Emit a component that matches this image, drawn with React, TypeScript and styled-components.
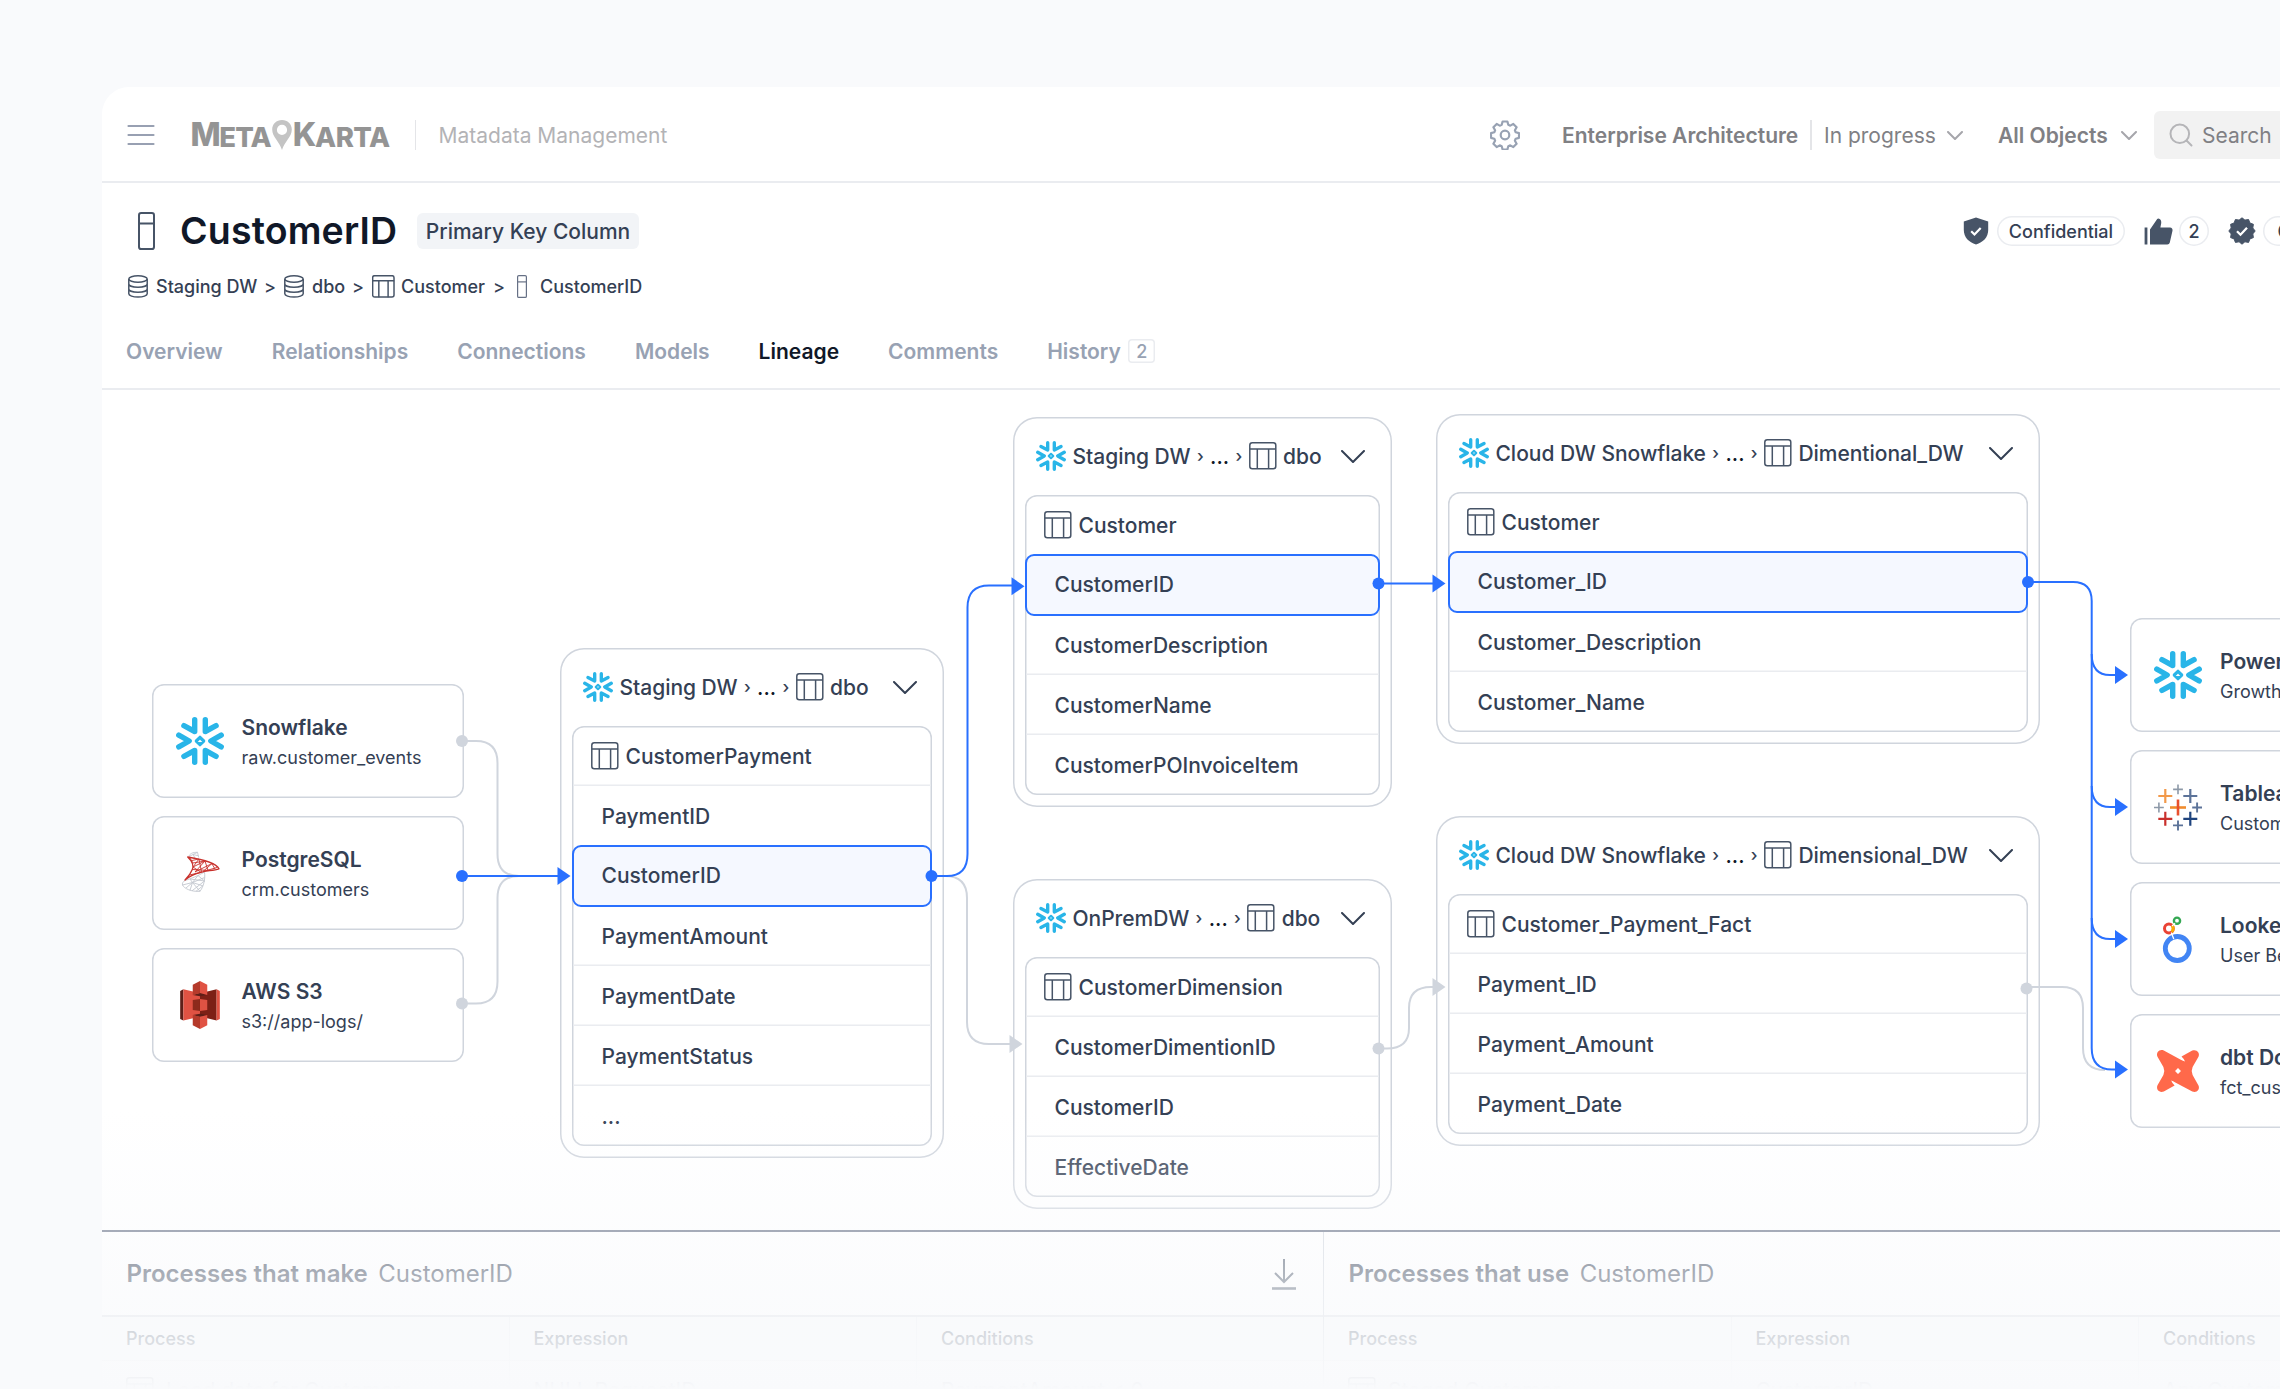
import React from 'react';
import styled, { createGlobalStyle, css } from 'styled-components';

const C = {
  ink: '#344054',
  slate: '#475467',
  mute: '#98a2b3',
  line: '#d0d5dd',
  hair: '#eaecf0',
  blue: '#2970ff',
  blueBg: '#f5f8ff',
  snow: '#29b5e8',
  page: '#f9fafc',
};

const Global = createGlobalStyle`
  *, *::before, *::after { box-sizing: border-box; }
  html, body { margin: 0; padding: 0; overflow: hidden; background: ${C.page}; }
  body { font-family: Inter, "Liberation Sans", sans-serif; color: ${C.ink}; }
  svg { display: block; flex: none; }
`;

const Page = styled.div`
  position: relative;
  width: 2280px;
  height: 1389px;
  padding: 87px 0 0 102px;
  overflow: hidden;
  background: ${C.page};
`;

const Panel = styled.div`
  display: flex;
  flex-direction: column;
  height: 1302px;
  background: #fff;
  border-top-left-radius: 27px;
  overflow: hidden;
`;

const Fade = styled.div`
  position: absolute;
  left: 0;
  right: 0;
  bottom: 0;
  height: 279px;
  background: linear-gradient(to bottom, rgba(249, 250, 252, 0), ${C.page});
  pointer-events: none;
`;

/* ---------- top bar ---------- */

const TopBar = styled.header`
  display: flex;
  align-items: center;
  flex: none;
  height: 96px;
  padding: 2px 0 0 25px;
  border-bottom: 2px solid ${C.hair};
  white-space: nowrap;
`;

const Logo = styled.div`
  display: flex;
  align-items: center;
  flex: none;
  width: 199px;
  margin-left: 35.5px;
  color: #949494;
  font-weight: 800;
`;

const LogoPart = styled.span<{ $size: number; $track: number; $drop?: number }>`
  font-size: ${(p) => p.$size}px;
  line-height: 30px;
  letter-spacing: ${(p) => p.$track}px;
  padding-top: ${(p) => p.$drop ?? 0}px;
`;

const Rule = styled.span<{ $ml: number; $mr: number }>`
  flex: none;
  width: 1.5px;
  height: 30px;
  margin-left: ${(p) => p.$ml}px;
  margin-right: ${(p) => p.$mr}px;
  background: #e4e5e8;
`;

const BarText = styled.span<{ $bold?: boolean; $tone: string; $w: number; $ml?: number }>`
  flex: none;
  width: ${(p) => p.$w}px;
  margin-left: ${(p) => p.$ml ?? 0}px;
  font-size: 21px;
  font-weight: ${(p) => (p.$bold ? 600 : 400)};
  color: ${(p) => p.$tone};
`;

const BarGroup = styled.div`
  display: flex;
  align-items: center;
  flex: none;
  margin-left: auto;
  width: 790px;
`;

const SearchBox = styled.div`
  display: flex;
  align-items: center;
  gap: 9px;
  flex: none;
  width: 140px;
  height: 48px;
  margin-left: 17px;
  padding-left: 15px;
  border-radius: 6px;
  background: #f2f2f2;
`;

/* ---------- object header ---------- */

const ObjectHeader = styled.section`
  display: flex;
  flex-direction: column;
  flex: none;
  height: 207px;
  padding: 28px 0 0 25px;
  border-bottom: 2px solid ${C.hair};
  white-space: nowrap;
`;

const TitleRow = styled.div`
  display: flex;
  align-items: center;
  height: 40px;
`;

const TitleIcon = styled.span`
  margin-left: 11px;
`;

const Title = styled.h1`
  flex: none;
  width: 217px;
  margin: 0 20px 0 25px;
  font-size: 37.5px;
  font-weight: 600;
  line-height: 40px;
  letter-spacing: 0.15px;
  color: #101828;
`;

const KindBadge = styled.span`
  display: flex;
  align-items: center;
  justify-content: center;
  width: 222px;
  height: 36px;
  border-radius: 6px;
  background: #f2f4f7;
  font-size: 21px;
  font-weight: 500;
`;

const Marks = styled.div`
  display: flex;
  align-items: center;
  width: 317.5px;
  margin-left: auto;
`;

const Pill = styled.span<{ $w: number; $ml: number; $mr: number }>`
  display: flex;
  align-items: center;
  justify-content: center;
  flex: none;
  width: ${(p) => p.$w}px;
  height: 30px;
  margin-left: ${(p) => p.$ml}px;
  margin-right: ${(p) => p.$mr}px;
  border-radius: 15px;
  box-shadow: inset 0 0 0 1.5px ${C.hair};
  font-size: 18px;
  font-weight: 500;
`;

const Crumbs = styled.nav`
  display: flex;
  align-items: center;
  height: 28px;
  margin-top: 21px;
  font-size: 18px;
  font-weight: 500;
`;

const Crumb = styled.span<{ $gap: number; $w: number; $pl?: number }>`
  display: flex;
  align-items: center;
  gap: ${(p) => p.$gap}px;
  width: ${(p) => p.$w}px;
  padding-left: ${(p) => p.$pl ?? 0}px;
`;

const CrumbSep = styled.span`
  width: 11px;
  margin: 0 9px 0 8px;
`;

const Tabs = styled.nav`
  display: flex;
  align-items: center;
  gap: 49px;
  height: 88px;
  margin-left: -1px;
  padding-top: 14px;
`;

const Tab = styled.span<{ $on?: boolean }>`
  display: flex;
  align-items: center;
  gap: 7.5px;
  font-size: 21px;
  font-weight: 600;
  color: ${(p) => (p.$on ? '#101828' : C.mute)};
`;

const TabCount = styled.span`
  display: flex;
  align-items: center;
  justify-content: center;
  width: 27px;
  height: 24px;
  border-radius: 4px;
  box-shadow: inset 0 0 0 1.5px ${C.hair};
  font-size: 18px;
  font-weight: 500;
`;

/* ---------- lineage canvas ---------- */

const ORIGIN = { x: 102, y: 390 };

const Canvas = styled.section`
  position: relative;
  flex: none;
  height: 840px;
`;

const Wires = styled.svg`
  position: absolute;
  inset: 0;
  pointer-events: none;
`;

const placed = css<{ $x: number; $y: number; $w: number }>`
  position: absolute;
  left: ${(p) => p.$x - ORIGIN.x}px;
  top: ${(p) => p.$y - ORIGIN.y}px;
  width: ${(p) => p.$w}px;
`;

const SystemCard = styled.div<{ $x: number; $y: number; $w: number }>`
  ${placed}
  display: flex;
  align-items: center;
  gap: 18px;
  height: 114px;
  padding-left: 24px;
  border-radius: 12px;
  background: #fff;
  box-shadow: inset 0 0 0 1.5px ${C.line};
  white-space: nowrap;
`;

const SystemText = styled.div`
  display: flex;
  flex-direction: column;
  padding-top: 4px;
`;

const SystemName = styled.span`
  font-size: 21px;
  font-weight: 600;
  line-height: 30px;
`;

const SystemPath = styled.span`
  font-size: 18px;
  line-height: 30px;
`;

const Node = styled.div<{ $x: number; $y: number; $w: number }>`
  ${placed}
  display: flex;
  flex-direction: column;
  padding: 0 12px 12px;
  border-radius: 24px;
  background: #fff;
  box-shadow: inset 0 0 0 1.5px ${C.line};
  font-size: 21px;
  font-weight: 500;
  white-space: nowrap;
`;

const NodeHead = styled.div`
  display: flex;
  align-items: center;
  height: 78px;
  padding: 0 15px 0 11px;
`;

const HeadSystem = styled.span`
  margin-left: 6.5px;
  letter-spacing: -0.03px;
`;

const HeadSep = styled.span`
  flex: none;
  width: 19.5px;
  font-size: 17px;
  line-height: 20px;
  text-align: center;
`;

const HeadDots = styled.span`
  flex: none;
  width: 19px;
  color: #101828;
`;

const HeadSchema = styled.span`
  margin-left: 6.5px;
  margin-right: auto;
  letter-spacing: -0.03px;
`;

const Columns = styled.div`
  display: flex;
  flex-direction: column;
  border-radius: 12px;
  box-shadow: inset 0 0 0 1.5px ${C.line};
`;

const ColumnRow = styled.div<{ $head?: boolean; $on?: boolean; $rule?: boolean }>`
  display: flex;
  align-items: center;
  gap: 7px;
  height: 60px;
  margin: 0 1px;
  padding-left: ${(p) => (p.$head ? 17.5 : 28.5)}px;
  box-shadow: ${(p) => (p.$rule ? `inset 0 -1.5px 0 ${C.hair}` : 'none')};
  ${(p) =>
    p.$on &&
    css`
      height: 61.5px;
      margin: -1px 0 -0.5px;
      border: 2px solid ${C.blue};
      padding-left: 27.5px;
      border-radius: 9px;
      background: ${C.blueBg};
    `}
`;

/* ---------- processes ---------- */

const Processes = styled.section`
  display: grid;
  grid-template-columns: 1222px 1222px;
  flex: 1;
  border-top: 2px solid #667085;
`;

const ProcessPane = styled.div`
  display: flex;
  flex-direction: column;
  border-right: 1.5px solid ${C.line};
`;

const PaneHead = styled.div`
  display: flex;
  align-items: center;
  gap: 10.5px;
  height: 85px;
  padding: 0 26px 0 24.5px;
  border-bottom: 2px solid #d9dce2;
  font-size: 24px;
  color: ${C.ink};
`;

const PaneTitle = styled.span`
  font-weight: 600;
`;

const PaneSubject = styled.span`
  margin-right: auto;
`;

const PaneRow = styled.div<{ $head?: boolean }>`
  display: grid;
  grid-template-columns: 407.5px 407.5px 1fr;
  height: ${(p) => (p.$head ? 44 : 60)}px;
  background: ${(p) => (p.$head ? '#f9fafb' : '#fff')};
  border-bottom: 1.5px solid ${C.hair};
  font-size: ${(p) => (p.$head ? 18 : 21)}px;
  font-weight: ${(p) => (p.$head ? 500 : 400)};
  color: ${(p) => (p.$head ? C.slate : C.ink)};
`;

const PaneCell = styled.span`
  display: flex;
  align-items: center;
  gap: 12px;
  padding-left: 24px;
  white-space: nowrap;

  &:not(:last-child) {
    border-right: 1px solid ${C.hair};
  }
`;

/* ---------- icons ---------- */

const MenuIcon = () => (
  <svg width="28" height="22" viewBox="0 0 28 22" stroke="#98a0b2" strokeWidth="2.2" strokeLinecap="round">
    <path d="M1.5 2h25M1.5 11h25M1.5 20h25" />
  </svg>
);

const PinIcon = () => (
  <svg width="22" height="32" viewBox="0 0 22 32">
    <path fill="#c4c4c4" fillRule="evenodd" d="M11 1C5.400 1 1.200 5 1.200 10.400c0 7.400 7.200 12 9.800 20.600 2.600-8.600 9.800-13.200 9.800-20.600C20.800 5 16.600 1 11 1Zm0 4.800a5.100 5.100 0 1 1 0 10.200 5.100 5.100 0 0 1 0-10.200Z" />
  </svg>
);

const GearIcon = () => (
  <svg width="30" height="30" viewBox="0 0 30 30" fill="none" stroke="#98a2b3" strokeWidth="2.200" strokeLinejoin="round">
    <path d="M12.600 1.500h4.800l.9 3.300 2 .85 3-1.750 3.300 3.400-1.700 3 .8 1.950 3.300.9v4.700l-3.300.9-.8 1.950 1.700 3-3.300 3.400-3-1.750-2 .85-.9 3.300h-4.800l-.9-3.300-2-.85-3 1.750-3.300-3.400 1.700-3-.8-1.950-3.300-.9v-4.700l3.300-.9.8-1.950-1.700-3 3.300-3.400 3 1.750 2-.85Z" />
    <circle cx="15" cy="15" r="4.300" />
  </svg>
);

const Chevron = ({ w = 22, h = 12, tone = C.ink, sw = 2 }: { w?: number; h?: number; tone?: string; sw?: number }) => (
  <svg width={w} height={h} viewBox={`0 0 ${w} ${h}`} fill="none" stroke={tone} strokeWidth={sw} strokeLinecap="round" strokeLinejoin="round">
    <path d={`M1 1L${w / 2} ${h - 1}L${w - 1} 1`} />
  </svg>
);

const SearchIcon = () => (
  <svg width="24" height="24" viewBox="0 0 24 24" fill="none" stroke="#b5b5b8" strokeWidth="2" strokeLinecap="round">
    <circle cx="10.800" cy="10.800" r="9.300" />
    <path d="M17.500 17.500l5 5" />
  </svg>
);

const ColumnIcon = ({ w, h, sw, tone = C.slate }: { w: number; h: number; sw: number; tone?: string }) => (
  <svg width={w} height={h} viewBox={`0 0 ${w} ${h}`} fill="none" stroke={tone} strokeWidth={sw}>
    <rect x={sw / 2} y={sw / 2} width={w - sw} height={h - sw} rx={w / 8} />
    <path d={`M0 ${h * 0.3}H${w}`} />
  </svg>
);

const DbIcon = () => (
  <svg width="20" height="23" viewBox="0 0 20 23" fill="none" stroke={C.slate} strokeWidth="1.500">
    <ellipse cx="10" cy="4" rx="9.200" ry="3.200" />
    <path d="M.8 4v14.800c0 1.800 4.100 3.300 9.200 3.300s9.200-1.500 9.200-3.300V4M.8 9c0 1.800 4.100 3.200 9.200 3.200s9.200-1.400 9.200-3.200M.8 14c0 1.800 4.100 3.200 9.200 3.200s9.200-1.400 9.200-3.200" />
  </svg>
);

const TableIcon = ({ s = 28 }: { s?: number }) => (
  <svg width={s} height={s} viewBox="0 0 28 28" fill="none" stroke={C.slate} strokeWidth={s < 25 ? 1.8 : 1.500}>
    <rect x=".8" y=".8" width="26" height="26" rx="2.500" />
    <path d="M1 7h26M8.300 7V27M19.600 7V27" />
  </svg>
);

const ShieldIcon = () => (
  <svg width="26" height="28" viewBox="0 0 26 28">
    <path fill={C.slate} d="M13 .6L25.200 4.600V13c0 7.200-5 12.300-12.200 14.600C5.800 25.300.8 20.200.8 13V4.600Z" />
    <path d="M8.200 14.200l3.300 3.300 6.200-6.400" fill="none" stroke="#fff" strokeWidth="2.200" />
  </svg>
);

const ThumbIcon = () => (
  <svg width="29" height="27" viewBox="0 0 29 27" fill={C.slate}>
    <path d="M.6 9.600h2.800v16.800H.6ZM6 11.500L13.200 1C13.700.3 14.900.3 15.700 1c1.300 1 1.800 2.600 1.500 4.200L16.400 9.600H26c1.700 0 2.900 1.500 2.500 3.200l-2.700 11.600c-.3 1.200-1.300 2-2.500 2H6Z" />
  </svg>
);

const SealIcon = () => (
  <svg width="28" height="28" viewBox="0 0 28 28">
    <path fill={C.slate} stroke={C.slate} strokeWidth="1" strokeLinejoin="round" d="M14 .8l2.900 2.300 3.700-.6 1.300 3.500 3.500 1.300-.6 3.700L27.200 14l-2.400 2.900.6 3.700-3.500 1.300-1.300 3.500-3.700-.6L14 27.200l-2.900-2.400-3.700.6-1.300-3.500-3.500-1.300.6-3.700L.8 14l2.400-3-.6-3.700L6.100 6l1.300-3.500 3.700.6Z" />
    <path d="M9 14.200l3.500 3.500 6.500-7" fill="none" stroke="#fff" strokeWidth="2.300" />
  </svg>
);

const DownloadIcon = () => (
  <svg width="26" height="32" viewBox="0 0 26 32" fill="none" stroke={C.slate} strokeWidth="2">
    <path d="M13 1v23M4 15l9 9 9-9" />
    <path d="M1 30.500h24" strokeWidth="2.600" />
  </svg>
);

const Snowflake = ({ s = 48 }: { s?: number }) => (
  <svg width={s} height={s} viewBox="0 0 48 48" fill="none" stroke={C.snow} strokeWidth="5.400" strokeLinecap="round" strokeLinejoin="round">
    <path d="M2.800 18.100L13.200 24L2.800 29.900M45.200 18.100L34.800 24L45.200 29.900" />
    <path d="M18.700 2.700V14.500L7.900 8.700M29.300 2.700V14.500L40.100 8.700M18.700 45.300V33.500L7.900 39.300M29.300 45.300V33.500L40.100 39.300" />
    <path d="M24 20.300L27.700 24L24 27.700L20.300 24Z" strokeWidth="3.200" />
  </svg>
);

const SqlServer = () => (
  <svg width="48" height="48" viewBox="0 0 48 48" fill="none" strokeWidth=".9" strokeLinejoin="round">
    <g stroke="#c3c7cf">
      <path d="M13 7.500c.5-3 4-4.300 8.500-4.200l1.200 5.200M13 7.500l4-2 5.500 1.300M17 5.500l4.500-2.200M17 5.500l2 3.500" />
      <path d="M9 31.500c-2 1-3 3-2.500 4.500 1.500 3.500 9 7 17.500 6.300 3.500-4.500 5.500-12 4.500-19.300M9 31.500c5-1.500 14-5 19.500-8.500M6.500 36l10-2.500 12.200-5M10 39l6.500-5.500L24 42.300M16.500 33.500L14 30l14.800 2M14 41.300l2.500-7.800L22 26.500l6.500 5.500L16 41.800M20 42.300l6.800-5.500-10.300-3.300" />
    </g>
    <g stroke="#c8302b">
      <path strokeWidth="1.300" d="M11.700 8c4 3.800 6.500 8 4.600 12.500-1.500 4-4.300 7.500-7.300 10.500 3.500-3 10-6.300 16-7.700 6.500-1.500 13-2 18-3.500C39.500 13 24 10 11.700 8Z" />
      <path d="M16 11.500L23 10l-6 8 12-6-10 11 17-8.500-9 8 14-4M23 10l2.500 13M29 12l3 9.500M35.500 14l3.500 6M13.500 26l11.500-2.700L17 18M14 9l3 5 12-2M16.500 20.500l18 1" />
    </g>
  </svg>
);

const AwsS3 = () => (
  <svg width="48" height="48" viewBox="0 0 256 310">
    <path fill="#5e1f18" d="M20.624 53.686L0 64v181.020l20.624 10.254Z" />
    <path fill="#e05243" d="M131 229L20.624 255.274V53.686L131 79.387Z" />
    <path fill="#8c2a1c" d="M81.178 187.866l46.818 5.960V116.060l-46.818 5.876Z" />
    <path fill="#7d2016" d="M127.996 229.295l107.371 26.035V53.686L127.996 79.682Z" />
    <path fill="#e05243" d="M174.827 187.866l-46.831 5.960v-78.048l46.831 6.161Z" />
    <path fill="#5e1f18" d="M174.827 89.631l-46.831 8.535-46.818-8.535 46.759-12.256Z" />
    <path fill="#5e1f18" d="M174.827 219.801l-46.831-8.591-46.818 8.591 46.761 13.053Z" />
    <path fill="#b53a2b" d="M81.178 89.631l46.818-11.586V0L81.178 23.413Z" />
    <path fill="#e05243" d="M174.827 89.631l-46.831-11.586V0l46.831 23.413Z" />
    <path fill="#b53a2b" d="M127.996 309.294l-46.823-23.405v-66.218l46.823 11.582Z" />
    <path fill="#e05243" d="M127.996 309.294l46.827-23.405v-66.218l-46.827 11.582Z" />
    <path fill="#e05243" d="M235.367 255.330l20.633-10.310V64l-20.633-10.314Z" />
  </svg>
);

const plus = (x: number, y: number, r: number) => `M${x - r} ${y}h${2 * r}M${x} ${y - r}v${2 * r}`;

const Tableau = () => (
  <svg width="48" height="48" viewBox="0 0 48 48" fill="none" strokeWidth="2.200">
    <path d={plus(24, 6.400, 4.900)} stroke="#8d99a8" strokeWidth="1.600" />
    <path d={plus(4.900, 24.500, 4.900)} stroke="#8d99a8" strokeWidth="1.600" />
    <path d={plus(43.100, 24.500, 4.900)} stroke="#5c7399" strokeWidth="1.900" />
    <path d={plus(24, 42.400, 5)} stroke="#5c7399" strokeWidth="1.900" />
    <path d={plus(11.300, 13, 7)} stroke="#f2994a" />
    <path d={plus(36.300, 13, 7)} stroke="#5c7399" />
    <path d={plus(11.300, 35.800, 7)} stroke="#c9302c" />
    <path d={plus(36.300, 35.800, 7)} stroke="#1f447e" />
    <path d="M16 24.500h16" stroke="#f08c2e" strokeWidth="2.600" />
    <path d="M24 16.500v16" stroke="#e8502d" strokeWidth="2.600" />
  </svg>
);

const LookerIcon = () => (
  <svg width="48" height="48" viewBox="0 0 48 48" fill="none">
    <circle cx="23.300" cy="33.500" r="12" stroke="#4285f4" strokeWidth="4.800" />
    <circle cx="14.900" cy="13.500" r="4.400" stroke="#ea4335" strokeWidth="3" />
    <path d="M17.900 10.300a4.400 4.400 0 0 1-.3 6.600" stroke="#f9ab00" strokeWidth="3" />
    <circle cx="23" cy="5.700" r="3.100" stroke="#34a853" strokeWidth="2.400" />
    <path d="M17.200 17.500l2.600 6.500M18 11l3-2.800" stroke="#fff" strokeWidth="1.300" />
  </svg>
);

const DbtIcon = () => (
  <svg width="48" height="48" viewBox="0 0 48 48">
    <path
      fill="#ff694a"
      fillRule="evenodd"
      d="M9.800 3.500L26.800 12.700Q29 13.800 31 14.500Q29.800 11.500 27.500 9.500L38.300 3.600C42.500 2 46.300 5.500 44.500 9.700L38.600 20Q36.800 24 38.600 28L44.500 38.500C46.300 42.500 42.500 46.300 38.300 44.500L21.300 35.400Q19 34.200 17.200 33.600Q18.200 36.500 20.600 38.500L9.800 44.500C5.500 46.300 1.700 42.500 3.500 38.300L9.400 28Q11.200 24 9.400 20L3.500 9.700C1.700 5.500 5.500 1.700 9.800 3.500ZM24 21L21 24L24 27L27 24Z"
    />
  </svg>
);

/* ---------- data ---------- */

type System = { x: number; y: number; w: number; icon: React.ReactNode; name: string; path: string };

const systems: System[] = [
  { x: 151.5, y: 684, w: 312, icon: <Snowflake />, name: 'Snowflake', path: 'raw.customer_events' },
  { x: 151.5, y: 816, w: 312, icon: <SqlServer />, name: 'PostgreSQL', path: 'crm.customers' },
  { x: 151.5, y: 948, w: 312, icon: <AwsS3 />, name: 'AWS S3', path: 's3://app-logs/' },
  { x: 2130, y: 618, w: 312, icon: <Snowflake />, name: 'Power BI', path: 'Growth Dashboard' },
  { x: 2130, y: 750, w: 312, icon: <Tableau />, name: 'Tableau', path: 'Customer Insights' },
  { x: 2130, y: 882, w: 312, icon: <LookerIcon />, name: 'Looker', path: 'User Behavior' },
  { x: 2130, y: 1014, w: 312, icon: <DbtIcon />, name: 'dbt Docs', path: 'fct_customers' },
];

type Entity = { x: number; y: number; w: number; system: string; schema: string; table: string; columns: string[]; active?: number };

const entities: Entity[] = [
  { x: 560, y: 648, w: 383.5, system: 'Staging DW', schema: 'dbo', table: 'CustomerPayment', columns: ['PaymentID', 'CustomerID', 'PaymentAmount', 'PaymentDate', 'PaymentStatus', '...'], active: 1 },
  { x: 1013, y: 417, w: 379, system: 'Staging DW', schema: 'dbo', table: 'Customer', columns: ['CustomerID', 'CustomerDescription', 'CustomerName', 'CustomerPOInvoiceItem'], active: 0 },
  { x: 1013, y: 879, w: 379, system: 'OnPremDW', schema: 'dbo', table: 'CustomerDimension', columns: ['CustomerDimentionID', 'CustomerID', 'EffectiveDate'] },
  { x: 1436, y: 414, w: 604, system: 'Cloud DW Snowflake', schema: 'Dimentional_DW', table: 'Customer', columns: ['Customer_ID', 'Customer_Description', 'Customer_Name'], active: 0 },
  { x: 1436, y: 816, w: 604, system: 'Cloud DW Snowflake', schema: 'Dimensional_DW', table: 'Customer_Payment_Fact', columns: ['Payment_ID', 'Payment_Amount', 'Payment_Date'] },
];

const greyWires = [
  'M462 741H476Q497.500 741 497.500 763V854Q497.500 876 519 876',
  'M462 1003.500H476Q497.500 1003.500 497.500 981.500V898Q497.500 876 519 876',
  'M945 876Q967 876 967 898V1022Q967 1044 989 1044H1010',
  'M1379 1048.500H1387Q1409 1048.500 1409 1028V1008Q1409 987 1431 987H1434',
  'M2027 987H2062Q2083 987 2083 1008V1048Q2083 1070 2105 1070',
];

const blueWires = [
  'M462 876H558',
  'M931 876H947Q967.500 876 967.500 854V607.500Q967.500 585.500 989 585.500H1012',
  'M1379 583.500H1433',
  'M2028 582H2073Q2091.700 582 2091.700 601V1048Q2091.700 1069.500 2112 1069.500H2116',
  'M2091.700 654Q2091.700 675 2110 675H2116',
  'M2091.700 786Q2091.700 807 2110 807H2116',
  'M2091.700 918Q2091.700 939 2110 939H2116',
];

const arrow = (x: number, y: number) => `M${x} ${y - 9}L${x + 13} ${y}L${x} ${y + 9}Z`;

const blueArrows: [number, number][] = [[557.500, 876], [1011.500, 586.300], [1432.500, 583.500], [2115, 675], [2115, 807], [2115, 939], [2115, 1069.500]];
const greyArrows: [number, number][] = [[1009.500, 1044], [1432.500, 987]];
const blueDots: [number, number][] = [[462, 876], [931.500, 876], [1378.500, 583.500], [2028, 582]];
const greyDots: [number, number][] = [[462, 741], [462, 1003.500], [1378.500, 1048.500], [2026.500, 988.500]];

const EntityNode = ({ x, y, w, system, schema, table, columns, active = -1 }: Entity) => (
  <Node $x={x} $y={y} $w={w}>
    <NodeHead>
      <Snowflake s={30} />
      <HeadSystem>{system}</HeadSystem>
      <HeadSep>›</HeadSep>
      <HeadDots>...</HeadDots>
      <HeadSep>›</HeadSep>
      <TableIcon />
      <HeadSchema>{schema}</HeadSchema>
      <Chevron w={24} h={13} />
    </NodeHead>
    <Columns>
      <ColumnRow $head $rule={active !== 0}>
        <TableIcon />
        {table}
      </ColumnRow>
      {columns.map((c, i) => (
        <ColumnRow key={c} $on={i === active} $rule={i !== active && i + 1 !== active && i < columns.length - 1}>
          {c}
        </ColumnRow>
      ))}
    </Columns>
  </Node>
);

const Pane = ({ title, first, rows }: { title: string; first?: boolean; rows: string[] }) => (
  <ProcessPane>
    <PaneHead>
      <PaneTitle>{title}</PaneTitle>
      <PaneSubject>CustomerID</PaneSubject>
      {first && <DownloadIcon />}
    </PaneHead>
    <PaneRow $head>
      <PaneCell>Process</PaneCell>
      <PaneCell>Expression</PaneCell>
      <PaneCell>Conditions</PaneCell>
    </PaneRow>
    <PaneRow>
      <PaneCell>
        <TableIcon />
        {rows[0]}
      </PaneCell>
      <PaneCell>{rows[1]}</PaneCell>
      <PaneCell>{rows[2]}</PaneCell>
    </PaneRow>
  </ProcessPane>
);

export default function App() {
  return (
    <Page>
      <Global />
      <Panel>
        <TopBar>
          <MenuIcon />
          <Logo>
            <LogoPart $size={32} $track={-1.5}>M</LogoPart>
            <LogoPart $size={27.5} $track={-0.8} $drop={3}>ETA</LogoPart>
            <PinIcon />
            <LogoPart $size={32} $track={-1.5}>K</LogoPart>
            <LogoPart $size={27.5} $track={-0.5} $drop={3}>ARTA</LogoPart>
          </Logo>
          <Rule $ml={25} $mr={22.5} />
          <BarText $tone="#b3b3b6" $w={230}>Matadata Management</BarText>
          <BarGroup>
            <GearIcon />
            <BarText $bold $tone="#808084" $w={248} $ml={42}>Enterprise Architecture</BarText>
            <Rule $ml={0} $mr={12.5} />
            <BarText $tone="#808084" $w={123}>In progress</BarText>
            <Chevron w={16} h={9} tone="#a6a6ab" />
            <BarText $bold $tone="#808084" $w={123} $ml={35}>All Objects</BarText>
            <Chevron w={16} h={9} tone="#a6a6ab" />
            <SearchBox>
              <SearchIcon />
              <BarText $tone="#808084" $w={80}>Search</BarText>
            </SearchBox>
          </BarGroup>
        </TopBar>

        <ObjectHeader>
          <TitleRow>
            <TitleIcon>
              <ColumnIcon w={17} h={38} sw={2} />
            </TitleIcon>
            <Title>CustomerID</Title>
            <KindBadge>Primary Key Column</KindBadge>
            <Marks>
              <ShieldIcon />
              <Pill $w={128} $ml={8.5} $mr={19}>Confidential</Pill>
              <ThumbIcon />
              <Pill $w={30} $ml={6} $mr={19}>2</Pill>
              <SealIcon />
              <Pill $w={104} $ml={7} $mr={0}>Certified</Pill>
            </Marks>
          </TitleRow>
          <Crumbs>
            <Crumb $gap={8} $w={129} $pl={1}><DbIcon />Staging DW</Crumb>
            <CrumbSep>&gt;</CrumbSep>
            <Crumb $gap={8} $w={60}><DbIcon />dbo</Crumb>
            <CrumbSep>&gt;</CrumbSep>
            <Crumb $gap={6} $w={113}><TableIcon s={23} />Customer</Crumb>
            <CrumbSep>&gt;</CrumbSep>
            <Crumb $gap={13} $w={140} $pl={4}>
              <ColumnIcon w={10} h={23} sw={1.200} tone="#667085" />
              CustomerID
            </Crumb>
          </Crumbs>
          <Tabs>
            <Tab>Overview</Tab>
            <Tab>Relationships</Tab>
            <Tab>Connections</Tab>
            <Tab>Models</Tab>
            <Tab $on>Lineage</Tab>
            <Tab>Comments</Tab>
            <Tab>History <TabCount>2</TabCount></Tab>
          </Tabs>
        </ObjectHeader>

        <Canvas>
          {systems.map((s) => (
            <SystemCard key={s.name} $x={s.x} $y={s.y} $w={s.w}>
              {s.icon}
              <SystemText>
                <SystemName>{s.name}</SystemName>
                <SystemPath>{s.path}</SystemPath>
              </SystemText>
            </SystemCard>
          ))}
          {entities.map((e) => (
            <EntityNode key={`${e.x}-${e.y}`} {...e} />
          ))}
          <Wires width="2178" height="840" viewBox={`${ORIGIN.x} ${ORIGIN.y} 2178 840`} fill="none" strokeWidth="2">
            {greyWires.map((d) => <path key={d} d={d} stroke={C.line} />)}
            {greyArrows.map(([x, y]) => <path key={`${x}-${y}`} d={arrow(x, y)} fill={C.line} />)}
            {greyDots.map(([x, y]) => <circle key={`${x}-${y}`} cx={x} cy={y} r="6" fill={C.line} />)}
            {blueWires.map((d) => <path key={d} d={d} stroke={C.blue} />)}
            {blueArrows.map(([x, y]) => <path key={`${x}-${y}`} d={arrow(x, y)} fill={C.blue} />)}
            {blueDots.map(([x, y]) => <circle key={`${x}-${y}`} cx={x} cy={y} r="6" fill={C.blue} />)}
          </Wires>
        </Canvas>

        <Processes>
          <Pane first title="Processes that make" rows={['Load data for Customer', 'NULL RequestID', 'PaymentAmount < 0']} />
          <Pane title="Processes that use" rows={['Staged Customer', 'CustomerID', 'Any Customer']} />
        </Processes>
      </Panel>
      <Fade />
    </Page>
  );
}
